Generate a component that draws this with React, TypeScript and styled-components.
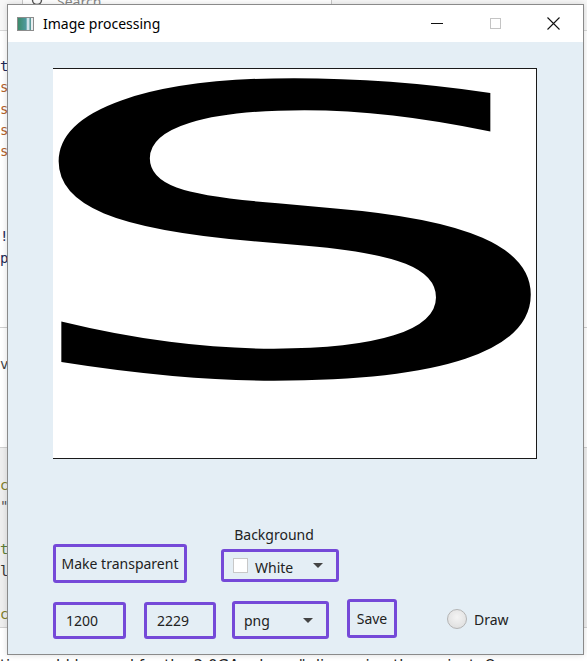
import React from 'react';
import styled, { createGlobalStyle } from 'styled-components';

const Global = createGlobalStyle`
  html, body { margin: 0; padding: 0; }
  body {
    width: 587px;
    height: 661px;
    overflow: hidden;
    background: #ffffff;
    font-family: "Noto Sans", "Open Sans", sans-serif;
  }
`;

const Desktop = styled.div`
  position: relative;
  width: 587px;
  height: 661px;
  overflow: hidden;
  background: #ffffff;
`;

const SearchStrip = styled.div`
  height: 30px;
  display: flex;
  align-items: flex-start;
  border-bottom: 1px solid #d8d8d8;
  background: #f7f7f7;
`;

const SearchBox = styled.div`
  margin-left: 22px;
  margin-top: -8px;
  height: 16px;
  width: 300px;
  border: 1px solid #c8c8c8;
  border-radius: 4px;
  display: flex;
  align-items: center;
  gap: 12px;
  padding-left: 8px;
  font-size: 14px;
  color: #888;
  background: #fff;
`;

const CodePanel = styled.div<{ $bg: string; $h: number; $pt: number }>`
  height: ${p => p.$h}px;
  padding-top: ${p => p.$pt}px;
  box-sizing: border-box;
  background: ${p => p.$bg};
  border-bottom: 1px solid #d0d0d0;
  font-family: "DejaVu Sans Mono", monospace;
  font-size: 14px;
`;

const CodeLine = styled.div<{ $c: string; $lh: number }>`
  height: ${p => p.$lh}px;
  line-height: ${p => p.$lh}px;
  color: ${p => p.$c};
  white-space: pre;
`;

const BottomText = styled.div`
  margin-top: 28px;
  font-family: "DejaVu Sans", sans-serif;
  font-size: 15px;
  color: #222;
  white-space: pre;
  line-height: 20px;
`;

const Window = styled.div`
  position: absolute;
  left: 7px;
  top: 4px;
  width: 577px;
  height: 651px;
  box-sizing: border-box;
  border: 1px solid #8a8a8a;
  background: #e4eef5;
  display: flex;
  flex-direction: column;
  box-shadow: 0 0 6px rgba(0, 0, 0, 0.15);
`;

const TitleBar = styled.div`
  height: 37px;
  flex: none;
  background: #ffffff;
  display: flex;
  align-items: center;
`;

const AppIcon = styled.div`
  margin-left: 9px;
  width: 15px;
  height: 12px;
  border: 1px solid #8c8c8c;
  background: linear-gradient(90deg, #3c8a6a 0%, #4f9aa0 55%, #cfe3ea 60%, #cfe3ea 75%, #5c9a9a 78%, #5c9a9a 88%, #e8eef0 90%);
`;

const Title = styled.div`
  margin-left: 9px;
  font-size: 14px;
  color: #000;
  flex: 1;
  padding-bottom: 1px;
`;

const CaptionButton = styled.div<{ $mr?: number }>`
  width: 58px;
  height: 37px;
  margin-right: ${p => p.$mr ?? 0}px;
  display: flex;
  align-items: center;
  justify-content: center;
`;

const Content = styled.div`
  flex: 1;
  display: flex;
  flex-direction: column;
  padding: 26px 0 0 45px;
`;

const Canvas = styled.div`
  width: 484px;
  height: 391px;
  box-sizing: border-box;
  background: #ffffff;
  border-top: 1px solid #1a1a1a;
  border-right: 1px solid #1a1a1a;
  border-bottom: 1px solid #1a1a1a;
  overflow: hidden;
`;

const Controls = styled.div`
  margin-top: 66px;
  display: flex;
  flex-direction: column;
`;

const Row = styled.div<{ $mt?: number; $ml?: number }>`
  display: flex;
  align-items: flex-end;
  margin-top: ${p => p.$mt ?? 0}px;
  margin-left: ${p => p.$ml ?? 0}px;
`;

const PurpleBox = styled.div<{ $w: number; $h: number; $ml?: number; $mb?: number }>`
  width: ${p => p.$w}px;
  height: ${p => p.$h}px;
  margin-left: ${p => p.$ml ?? 0}px;
  margin-bottom: ${p => p.$mb ?? 0}px;
  box-sizing: border-box;
  border: 3px solid #7549d8;
  border-radius: 3px;
  display: flex;
  align-items: center;
  font-size: 14px;
  color: #222;
  flex: none;
`;

const ButtonBox = styled(PurpleBox)`
  justify-content: center;
`;

const FieldBox = styled(PurpleBox)`
  padding-left: 10px;
`;

const ComboBox = styled(PurpleBox)`
  padding-left: 9px;
  padding-right: 13px;
`;

const ComboText = styled.span<{ $pt?: number }>`
  flex: 1;
  padding-top: ${p => p.$pt ?? 0}px;
`;

const Arrow = styled.span`
  width: 0;
  height: 0;
  border-left: 5px solid transparent;
  border-right: 5px solid transparent;
  border-top: 5px solid #444;
`;

const Check = styled.span`
  width: 15px;
  height: 15px;
  box-sizing: border-box;
  border: 1px solid #c8c8c8;
  background: #fff;
  margin-right: 7px;
`;

const Group = styled.div<{ $ml: number }>`
  display: flex;
  flex-direction: column;
  align-items: center;
  margin-left: ${p => p.$ml}px;
`;

const Label = styled.div`
  font-size: 14px;
  color: #222;
  margin-bottom: 5px;
  margin-right: 12px;
`;

const RadioWrap = styled.div`
  display: flex;
  align-items: center;
  margin-left: 50px;
  margin-bottom: 11px;
  font-size: 14px;
  color: #222;
  gap: 7px;
`;

const Radio = styled.span`
  width: 20px;
  height: 20px;
  box-sizing: border-box;
  border-radius: 50%;
  border: 1px solid #b4b4b4;
  background: radial-gradient(circle at 50% 40%, #f4f4f4 0%, #e2e2e2 70%, #d6d6d6 100%);
`;

const codeA: [string, string][] = [
  ['t', '#1f2a56'], ['s', '#b0602a'], ['s', '#b0602a'], ['s', '#b0602a'], ['s', '#b0602a'],
  [' ', '#000'], [' ', '#000'], [' ', '#000'], ['!', '#1f2a56'], ['p', '#1f2a56'],
  [' ', '#000'], [' ', '#000'], [' ', '#000'],
];
const codeB: [string, string][] = [
  ['va', '#444'], [' ', '#000'], [' ', '#000'], [' ', '#000'], [' ', '#000'],
];
const codeC: [string, string][] = [
  [' ', '#000'], ['c', '#7d7d26'], ['"', '#555'], [' ', '#000'], ['t', '#5d7d36'], ['l', '#333'], [' ', '#000'], ['c', '#7d7d26'],
];

export default function App() {
  return (
    <Desktop>
      <Global />
      <SearchStrip>
        <SearchBox>
          <svg width="14" height="14" viewBox="0 0 14 14"><circle cx="6" cy="6" r="4.5" fill="none" stroke="#555" strokeWidth="1.4" /></svg>
          Search...
        </SearchBox>
      </SearchStrip>
      <CodePanel $bg="#ffffff" $h={297} $pt={25}>
        {codeA.map(([t, c], i) => (
          <CodeLine key={i} $c={c} $lh={21.3}>{t}</CodeLine>
        ))}
      </CodePanel>
      <CodePanel $bg="#ffffff" $h={120} $pt={26}>
        {codeB.map(([t, c], i) => (
          <CodeLine key={i} $c={c} $lh={21.5}>{t}</CodeLine>
        ))}
      </CodePanel>
      <CodePanel $bg="#eeeeee" $h={180} $pt={5}>
        {codeC.map(([t, c], i) => (
          <CodeLine key={i} $c={c} $lh={21.5}>{t}</CodeLine>
        ))}
      </CodePanel>
      <BottomText>{'ti    could be used for the 2.0GA release" discussing the project. One'}</BottomText>

      <Window>
        <TitleBar>
          <AppIcon />
          <Title>Image processing</Title>
          <CaptionButton>
            <svg width="12" height="2" viewBox="0 0 12 2"><rect width="12" height="1" fill="#111" /></svg>
          </CaptionButton>
          <CaptionButton>
            <svg width="11" height="11" viewBox="0 0 11 11"><rect x="0.5" y="0.5" width="10" height="10" fill="none" stroke="#c4c4c4" /></svg>
          </CaptionButton>
          <CaptionButton $mr={1}>
            <svg width="13" height="13" viewBox="0 0 13 13"><path d="M0.5 0.5 L12.5 12.5 M12.5 0.5 L0.5 12.5" stroke="#111" strokeWidth="1.1" /></svg>
          </CaptionButton>
        </TitleBar>
        <Content>
          <Canvas>
            <svg width="483" height="390" viewBox="0 0 483 390">
              <text
                transform="translate(-55 306) scale(2.3 1)"
                fontFamily="DejaVu Sans, sans-serif"
                fontSize="400"
                fill="#000"
              >S</text>
            </svg>
          </Canvas>
          <Controls>
            <Row>
              <ButtonBox $w={134} $h={39}>Make transparent</ButtonBox>
              <Group $ml={34}>
                <Label>Background</Label>
                <ComboBox $w={118} $h={33} $mb={1}>
                  <Check />
                  <ComboText $pt={4}>White</ComboText>
                  <Arrow />
                </ComboBox>
              </Group>
            </Row>
            <Row $mt={16}>
              <FieldBox $w={73} $h={37} $mb={1}>1200</FieldBox>
              <FieldBox $w={72} $h={37} $ml={18} $mb={1}>2229</FieldBox>
              <ComboBox $w={97} $h={38} $ml={16} $mb={1}>
                <ComboText>png</ComboText>
                <Arrow />
              </ComboBox>
              <ButtonBox $w={50} $h={39} $ml={18} $mb={2}>Save</ButtonBox>
              <RadioWrap>
                <Radio />
                Draw
              </RadioWrap>
            </Row>
          </Controls>
        </Content>
      </Window>
    </Desktop>
  );
}
